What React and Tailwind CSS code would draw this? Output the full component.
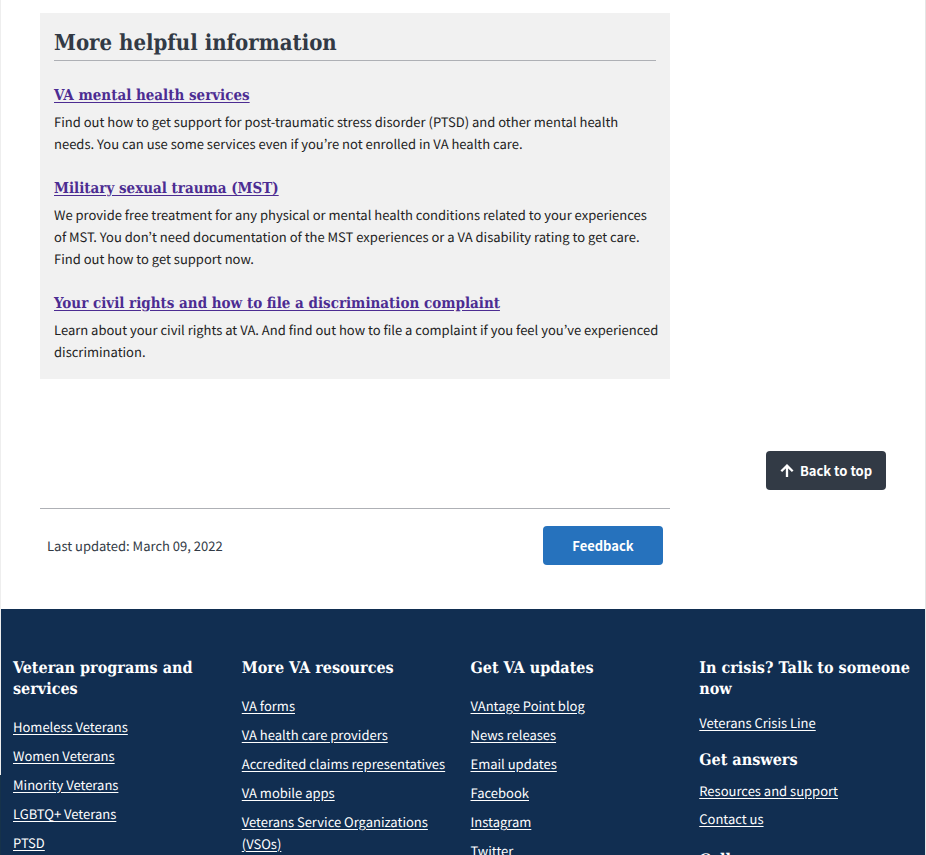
const articles = [
  {
    title: "VA mental health services",
    text: "Find out how to get support for post-traumatic stress disorder (PTSD) and other mental health needs. You can use some services even if you’re not enrolled in VA health care.",
  },
  {
    title: "Military sexual trauma (MST)",
    text: "We provide free treatment for any physical or mental health conditions related to your experiences of MST. You don’t need documentation of the MST experiences or a VA disability rating to get care. Find out how to get support now.",
  },
  {
    title: "Your civil rights and how to file a discrimination complaint",
    text: "Learn about your civil rights at VA. And find out how to file a complaint if you feel you’ve experienced discrimination.",
  },
];

const linkColumns = [
  {
    title: "Veteran programs and services",
    links: ["Homeless Veterans", "Women Veterans", "Minority Veterans", "LGBTQ+ Veterans", "PTSD"],
  },
  {
    title: "More VA resources",
    links: [
      "VA forms",
      "VA health care providers",
      "Accredited claims representatives",
      "VA mobile apps",
      "Veterans Service Organizations (VSOs)",
    ],
  },
  {
    title: "Get VA updates",
    links: ["VAntage Point blog", "News releases", "Email updates", "Facebook", "Instagram", "Twitter"],
  },
];

const serif = "font-['DejaVu_Serif_Condensed','DejaVu_Serif',serif] font-bold";

function FooterHeading({ children }) {
  return <h2 className={`${serif} text-[16px] leading-[21px]`}>{children}</h2>;
}

function FooterLinks({ links, className }) {
  return (
    <ul className={`flex flex-col ${className}`}>
      {links.map((label) => (
        <li key={label} className="leading-[22px]">
          <a href="#" className="underline underline-offset-2">{label}</a>
        </li>
      ))}
    </ul>
  );
}

function Footer() {
  return (
    <footer className="grid flex-1 grid-cols-4 gap-[15px] bg-[#112e51] px-3 pt-12 text-white">
      {linkColumns.map((column) => (
        <div key={column.title}>
          <FooterHeading>{column.title}</FooterHeading>
          <FooterLinks links={column.links} className="mt-[17px] gap-[7px]" />
        </div>
      ))}
      <div>
        <FooterHeading>In crisis? Talk to someone now</FooterHeading>
        <FooterLinks links={["Veterans Crisis Line"]} className="mt-[13px] mb-[15px]" />
        <FooterHeading>Get answers</FooterHeading>
        <FooterLinks links={["Resources and support", "Contact us"]} className="mt-[10px] mb-[19px] gap-[6px]" />
        <FooterHeading>Call us</FooterHeading>
      </div>
    </footer>
  );
}

export default function App() {
  return (
    <div className="flex h-screen overflow-hidden bg-white font-['Noto_Sans_CJK_KR','Noto_Sans',sans-serif] text-[13px] text-[#212121] [text-rendering:geometricPrecision]">
      <div className="flex w-px flex-col bg-[#16324a]">
        <div className="h-[775px] bg-[#eeeeee]" />
      </div>
      <div className="flex min-w-0 flex-1 flex-col">
        <main className="px-[39px] pt-[13px] pb-11">
          <div className="flex">
            <section className="min-w-0 flex-1 bg-[#f1f1f1] px-[14px] pt-4 pb-4">
              <h2 className={`${serif} border-b border-[#aeb0b5] pb-[3px] text-[22px] leading-7 text-[#323a45]`}>
                More helpful information
              </h2>
              <div className="mt-[23px] flex flex-col gap-[22px]">
                {articles.map((article) => (
                  <article key={article.title}>
                    <h3 className={`${serif} text-[15px] leading-[22px]`}>
                      <a href="#" className="text-[#4c2c92] underline underline-offset-2">{article.title}</a>
                    </h3>
                    <p className="-mr-1 mt-[5px] leading-[22px]">{article.text}</p>
                  </article>
                ))}
              </div>
            </section>
            <div className="w-[216px]" />
          </div>
          <div className="mt-[72px] flex justify-end">
            <button className="flex h-[39px] w-[120px] items-center justify-center gap-[6px] rounded bg-[#323a45] font-bold text-white">
              <svg width="14" height="14" viewBox="0 0 14 14" fill="none" stroke="currentColor" strokeWidth="2.3" aria-hidden="true">
                <path d="M7 13V2M1.3 7.2L7 1.6L12.7 7.2" />
              </svg>
              Back to top
            </button>
          </div>
          <div className="mt-[18px] mr-[216px] flex items-center justify-between border-t border-[#aeb0b5] px-[7px] pt-[17px]">
            <p className="text-[#323a45]">Last updated: March 09, 2022</p>
            <button className="h-[39px] w-[120px] rounded bg-[#2672bd] font-bold text-white">Feedback</button>
          </div>
        </main>
        <Footer />
      </div>
      <div className="w-px bg-[#e4e4e4]" />
    </div>
  );
}
